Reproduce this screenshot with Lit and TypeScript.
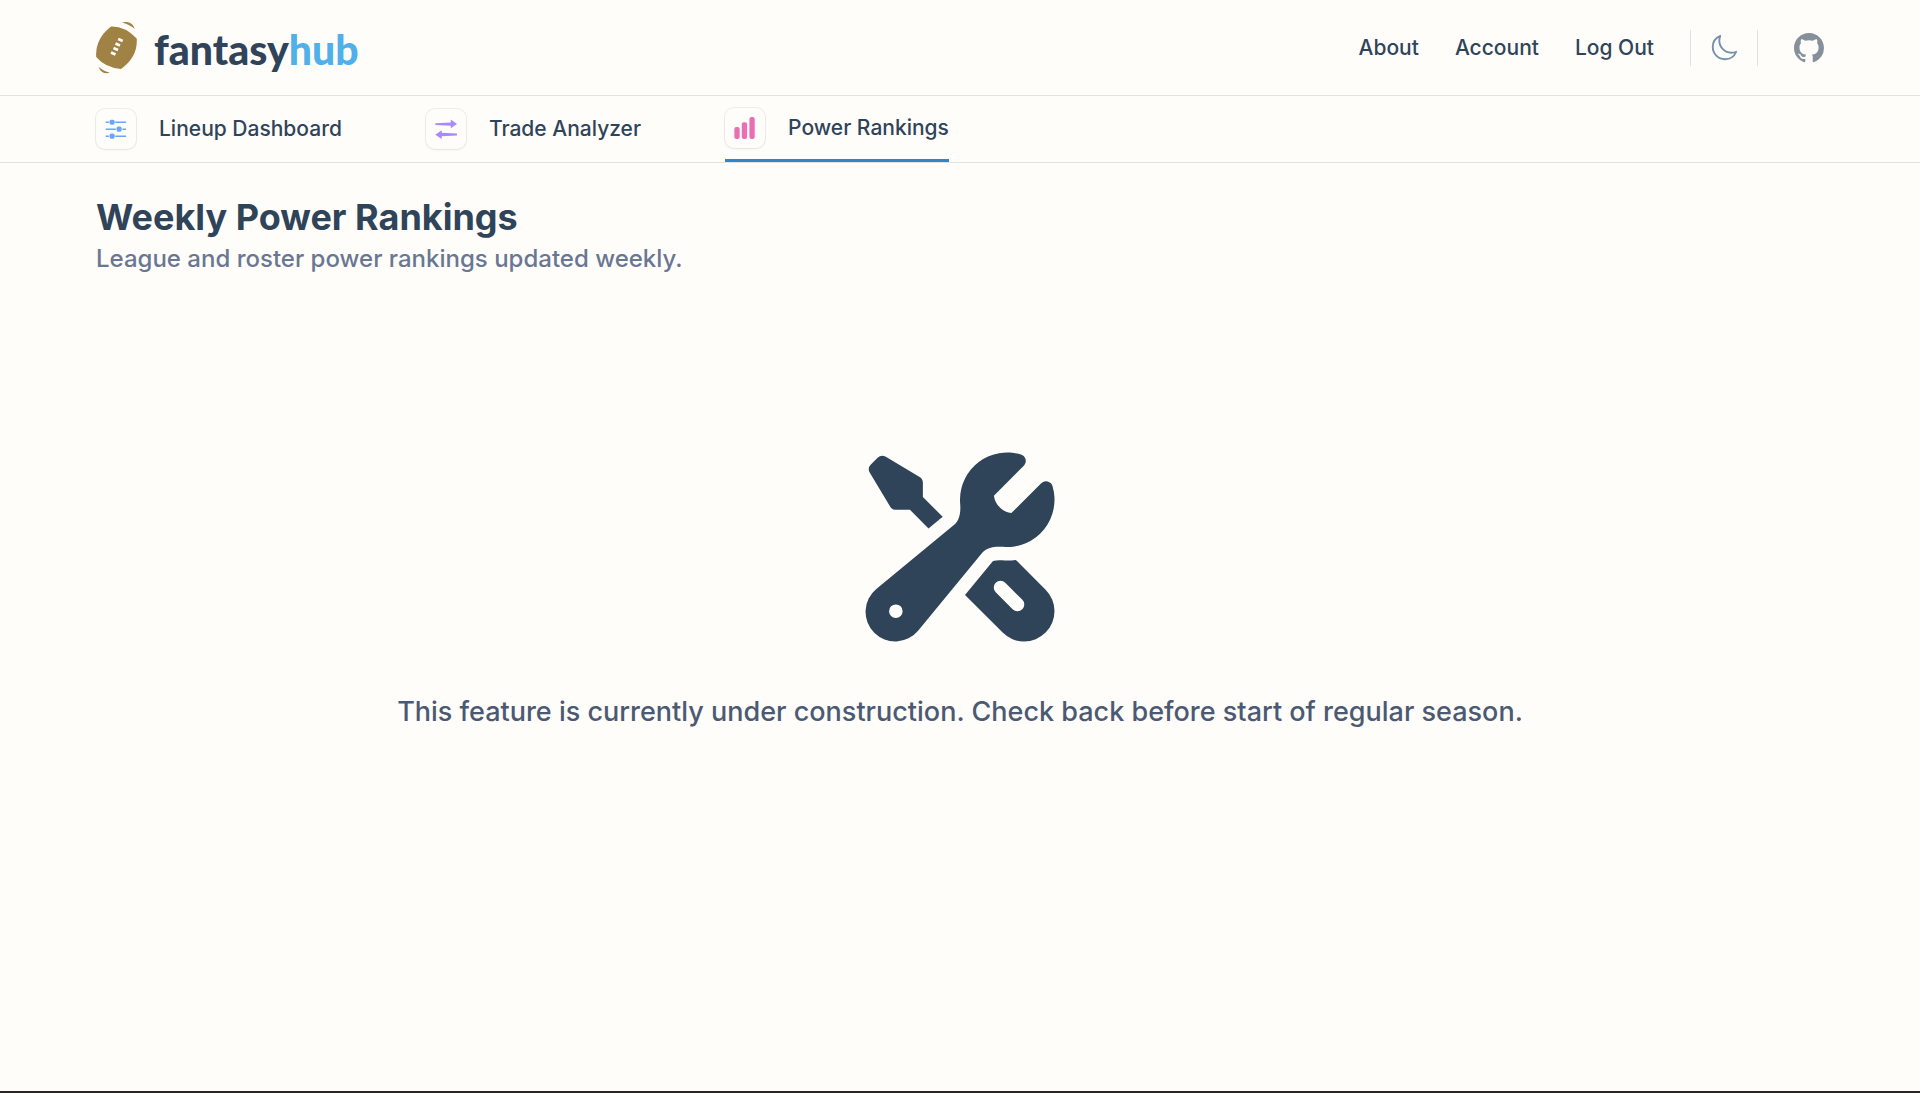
import { LitElement, html, svg, css } from "lit";
import { customElement } from "lit/decorators.js";

const football = svg`
  <svg class="ball" viewBox="0 0 42 52" aria-hidden="true">
    <path d="M15 4.500Q29 4 40.700 16.500Q42 35 25 47Q9 45.500 .2 35Q-1 17 15 4.500Z" fill="#a08244"/>
    <path d="M26 .5Q36 -2 38.800 7Q33 2 26 .5ZM2.500 45Q8 49.500 14 50.800Q6 53 2.500 45Z" fill="#a08244"/>
    <path d="M22.200 17l4.500 2M19.500 21.500l4.500 2M17.500 26l4.500 2M15 30.500l4.500 2" stroke="#fffdfa" stroke-width="2.800"/>
  </svg>`;

const moon = svg`
  <svg class="moon" viewBox="0 0 24 24" fill="none" stroke="currentColor" stroke-width="1.500" stroke-linejoin="round" stroke-linecap="round" aria-hidden="true">
    <path d="M21.752 15.002A9.718 9.718 0 0 1 18 15.750c-5.385 0-9.750-4.365-9.750-9.750 0-1.330.266-2.597.748-3.752A9.753 9.753 0 0 0 3 11.250C3 16.635 7.365 21 12.750 21a9.753 9.753 0 0 0 9.002-5.998Z"/>
  </svg>`;

const github = svg`
  <svg class="github" viewBox="0 0 16 16" fill="currentColor" aria-hidden="true">
    <path d="M8 0C3.58 0 0 3.58 0 8c0 3.54 2.29 6.53 5.47 7.59.4.07.55-.17.55-.38 0-.19-.01-.82-.01-1.49-2.01.37-2.53-.49-2.69-.94-.09-.23-.48-.94-.82-1.13-.28-.15-.68-.52-.01-.53.63-.01 1.08.58 1.23.82.72 1.21 1.87.87 2.33.66.07-.52.28-.87.51-1.07-1.78-.2-3.64-.89-3.64-3.95 0-.87.31-1.59.82-2.15-.08-.2-.36-1.02.08-2.12 0 0 .67-.21 2.2.82.64-.18 1.32-.27 2-.27s1.36.09 2 .27c1.53-1.04 2.2-.82 2.2-.82.44 1.1.16 1.92.08 2.12.51.56.82 1.27.82 2.15 0 3.07-1.87 3.75-3.65 3.95.29.25.54.73.54 1.48 0 1.07-.01 1.93-.01 2.2 0 .21.15.46.55.38A8.01 8.01 0 0 0 16 8c0-4.42-3.58-8-8-8Z"/>
  </svg>`;

const sliders = svg`
  <svg class="glyph" viewBox="0 0 24 24" fill="#6aa5fb" aria-hidden="true">
    <path d="M.7 3.800H4.200V5.400H.7ZM11.200 3.800H23V5.400H11.200ZM.7 11.400H11.700V13H.7ZM19 11.400H23V13H19ZM.7 19H4.200V20.600H.7ZM11.200 19H23V20.600H11.200Z"/>
    <rect x="5" y="1.800" width="5.500" height="5.500" rx="1.800"/><rect x="12.600" y="9.400" width="5.500" height="5.500" rx="1.800"/><rect x="5" y="17" width="5.500" height="5.500" rx="1.800"/>
  </svg>`;

const arrows = svg`
  <svg class="glyph" viewBox="0 0 24 24" fill="#a78bfa" aria-hidden="true">
    <path d="M.6 5.600L17.200 4.800V1.700L24 6.600L17.200 11.300V8.500L.6 7.600Q-.2 6.600 .6 5.600ZM24 17L7.300 16.200V13.300L.3 18.200L7.300 23V20L24 19.100Q24.600 18 24 17Z"/>
  </svg>`;

const bars = svg`
  <svg class="glyph" viewBox="0 0 24 24" fill="#e86fb5" aria-hidden="true">
    <rect x=".4" y="11" width="5.800" height="13" rx="2.200"/><rect x="8.500" y="5.800" width="5.800" height="18.200" rx="2.200"/><rect x="16.800" y="0" width="5.800" height="24" rx="2.200"/>
  </svg>`;

const tools = svg`
  <svg class="tools" viewBox="0 0 24 24" fill="currentColor" fill-rule="evenodd" aria-hidden="true">
    <path d="M12 6.750a5.250 5.250 0 0 1 6.775-5.025.750.750 0 0 1 .313 1.248l-3.320 3.319c.063.475.276.934.641 1.299.365.365.824.578 1.300.640l3.318-3.319a.750.750 0 0 1 1.248.313 5.250 5.250 0 0 1-5.472 6.756c-1.018-.086-1.870.100-2.309.634L7.344 21.300A3.298 3.298 0 1 1 2.700 16.657l8.684-7.151c.533-.440.720-1.291.634-2.309A5.342 5.342 0 0 1 12 6.750ZM4.117 19.125a.750.750 0 0 1 .750-.750h.008a.750.750 0 0 1 .750.750v.008a.750.750 0 0 1-.750.750h-.008a.750.750 0 0 1-.750-.750v-.008Z"/>
    <path d="m10.076 8.640-2.201-2.200V4.874a.750.750 0 0 0-.364-.643l-3.750-2.250a.750.750 0 0 0-.916.113l-.750.750a.750.750 0 0 0-.113.916l2.250 3.750a.750.750 0 0 0 .643.364h1.564l2.062 2.062 1.575-1.297Z"/>
    <path d="m12.556 17.329 4.183 4.182a3.375 3.375 0 0 0 4.773-4.773l-3.306-3.305a6.803 6.803 0 0 1-1.530.043c-.394-.034-.682-.006-.867.042a.589.589 0 0 0-.167.063l-3.086 3.748Zm3.414-1.360a.750.750 0 0 1 1.060 0l1.875 1.876a.750.750 0 1 1-1.060 1.060L15.970 17.030a.750.750 0 0 1 0-1.060Z"/>
  </svg>`;

const tabs = [
  { label: "Lineup Dashboard", icon: sliders, current: false },
  { label: "Trade Analyzer", icon: arrows, current: false },
  { label: "Power Rankings", icon: bars, current: true },
];

@customElement("app-root")
export class AppRoot extends LitElement {
  static styles = css`
    :host {
      display: flex;
      flex-direction: column;
      min-height: 100vh;
      box-sizing: border-box;
      background: #fffdfa;
      border-bottom: 2px solid #272729;
      color: #2f4459;
      font-family: Inter, "Liberation Sans", sans-serif;
      font-size: 21px;
      font-weight: 450;
      line-height: 32px;
    }
    * { box-sizing: border-box; }
    svg { display: block; flex: none; }
    a { color: inherit; text-decoration: none; }
    .header {
      display: flex;
      align-items: center;
      justify-content: space-between;
      height: 96px;
      padding: 0 96px;
      border-bottom: 1px solid #e2e2e0;
    }
    .brand { display: flex; align-items: center; gap: 16px; }
    .ball { width: 42px; height: 52px; }
    .wordmark { padding-top: 4px; font: 900 41px/52px Lato, sans-serif; }
    .accent { color: #50b0ea; }
    .links { display: flex; align-items: center; gap: 36px; }
    .theme {
      display: flex;
      align-items: center;
      height: 36px;
      padding: 0 18px;
      border: 1px solid #dfe1e2;
      border-width: 0 1px;
      background: none;
      color: #7590ab;
    }
    .moon { width: 30px; height: 30px; }
    .github { width: 30px; height: 30px; color: #86909a; }
    .tabs {
      display: flex;
      gap: 84px;
      height: 67px;
      padding: 0 96px;
      border-bottom: 1px solid #e2e2e0;
    }
    .tab { display: flex; align-items: center; gap: 23px; }
    .current { border-bottom: 3px solid #3384c9; }
    .tile {
      display: grid;
      place-items: center;
      width: 40px;
      height: 40px;
      border-radius: 9px;
      box-shadow: 0 0 0 1px #0000000f, 0 1px 3px #0000000d;
    }
    .glyph { width: 22px; height: 22px; }
    .content { padding: 35px 96px; }
    .title { margin: 0; font-size: 36px; line-height: 38px; font-weight: 700; }
    .subtitle { margin: 5px 0 0; font-size: 24px; line-height: 36px; color: #697792; }
    .notice { display: flex; flex-direction: column; align-items: center; gap: 36px; padding-top: 162px; }
    .tools { width: 216px; height: 216px; }
    .message { margin: 0; font-size: 27px; line-height: 42px; color: #4b5a72; text-align: center; }
  `;

  render() {
    return html`
      <header class="header">
        <a class="brand" href="#">${football}<span class="wordmark">fantasy<span class="accent">hub</span></span></a>
        <nav class="links" aria-label="Account">
          <a href="#about">About</a>
          <a href="#account">Account</a>
          <a href="#logout">Log Out</a>
          <button class="theme" type="button" aria-label="Toggle dark mode">${moon}</button>
          <a href="#github" aria-label="GitHub">${github}</a>
        </nav>
      </header>
      <nav class="tabs" aria-label="Tools">
        ${tabs.map((t) => html`
          <a class="tab ${t.current ? "current" : ""}" href="#" aria-current=${t.current ? "page" : "false"}>
            <span class="tile">${t.icon}</span><span>${t.label}</span>
          </a>`)}
      </nav>
      <main class="content">
        <h1 class="title">Weekly Power Rankings</h1>
        <p class="subtitle">League and roster power rankings updated weekly.</p>
        <section class="notice">
          ${tools}
          <p class="message">This feature is currently under construction. Check back before start of regular season.</p>
        </section>
      </main>`;
  }
}
